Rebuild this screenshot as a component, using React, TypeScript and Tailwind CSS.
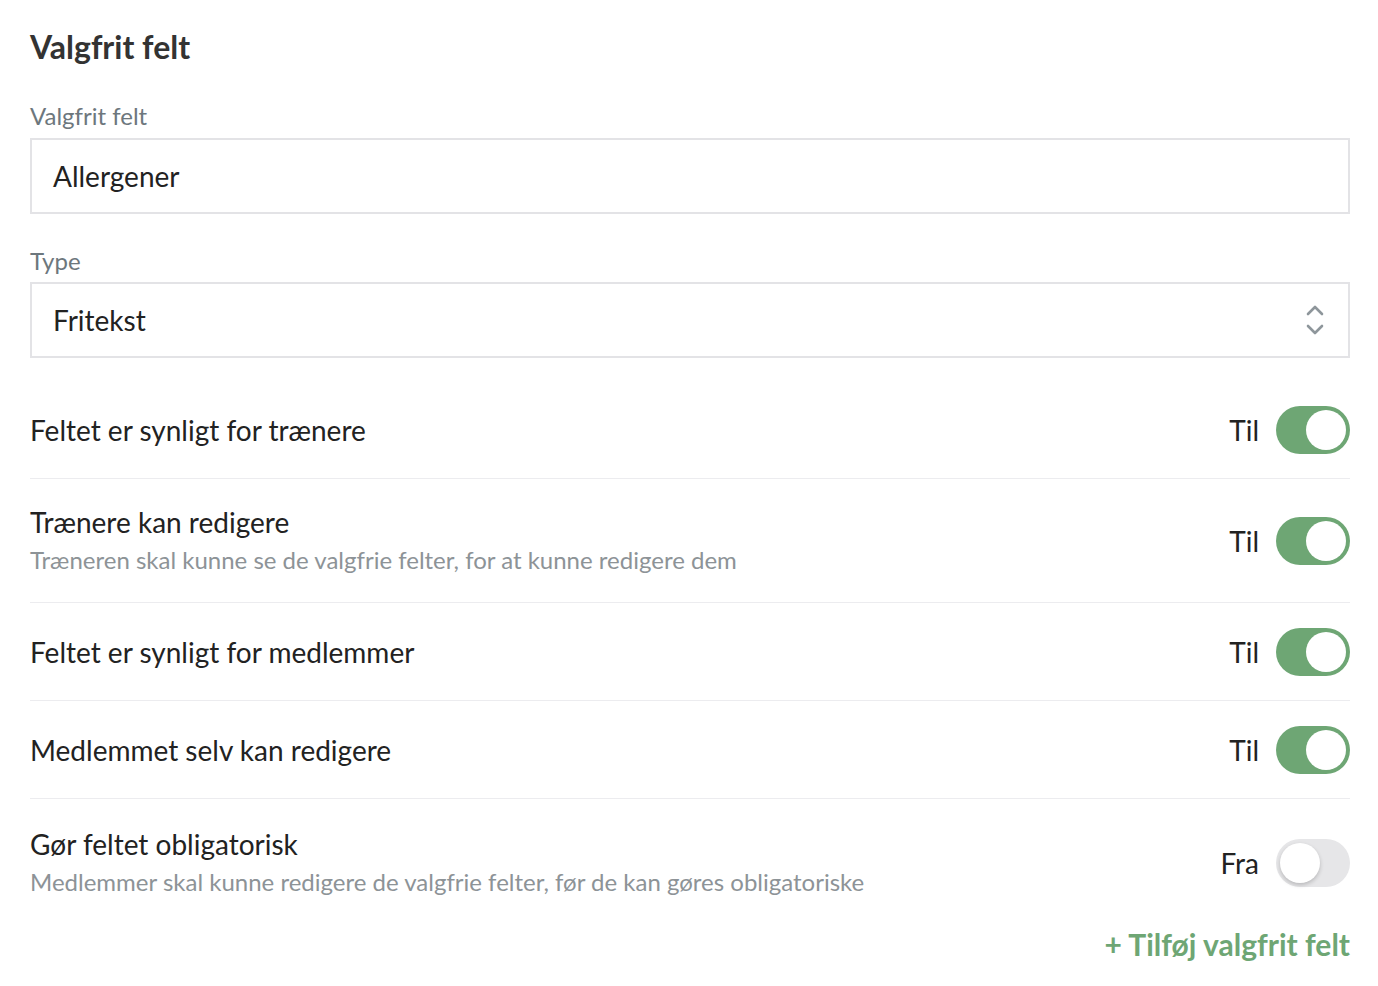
import React from "react";

function Toggle({ on }: { on: boolean }) {
  return (
    <div
      className={
        on
          ? "relative h-[48px] w-[74px] shrink-0 rounded-full bg-[#6ea674]"
          : "relative h-[48px] w-[74px] shrink-0 rounded-full bg-[#e6e6e8]"
      }
    >
      <div
        className={
          on
            ? "absolute top-[4px] left-[30px] h-[40px] w-[40px] rounded-full bg-white"
            : "absolute top-[4px] left-[4px] h-[40px] w-[40px] rounded-full bg-white shadow-[0_2px_4px_rgba(0,0,0,0.2)]"
        }
      />
    </div>
  );
}

function Row({
  title,
  desc,
  on,
  last,
}: {
  title: string;
  desc?: string;
  on: boolean;
  last?: boolean;
}) {
  return (
    <div
      className={
        last
          ? "flex items-center justify-between pt-[26px] pb-[20px]"
          : "flex min-h-[98px] items-center justify-between border-b border-[#ececef] py-[24px]"
      }
    >
      <div className="flex flex-col">
        <div className="text-[28px] leading-[38px] text-[#222]">{title}</div>
        {desc && (
          <div className="text-[24px] leading-[37px] text-[#8d9397]">{desc}</div>
        )}
      </div>
      <div className="flex items-center gap-[17px]">
        <span className="text-[28px] text-[#222]">{on ? "Til" : "Fra"}</span>
        <Toggle on={on} />
      </div>
    </div>
  );
}

export default function App() {
  return (
    <div
      className="min-h-screen bg-white pl-[30px] pr-[28px] pt-[26px]"
      style={{ fontFamily: "Lato, 'Open Sans', sans-serif" }}
    >
      <h1 className="text-[32px] font-bold leading-[42px] text-[#333]">Valgfrit felt</h1>
      <div className="mt-[33px] text-[24px] leading-[30px] text-[#6d777d]">Valgfrit felt</div>
      <div className="mt-[7px] flex h-[76px] items-center border-2 border-[#e3e3e6] pl-[21px] text-[28px] text-[#222]">
        Allergener
      </div>
      <div className="mt-[32px] text-[24px] leading-[30px] text-[#6d777d]">Type</div>
      <div className="mt-[6px] flex h-[76px] items-center justify-between border-2 border-[#e3e3e6] pl-[21px] pr-[24px] text-[28px] text-[#222]">
        <span>Fritekst</span>
        <svg width="18" height="30" viewBox="0 0 18 30" fill="none" stroke="#8e969b" strokeWidth="2.6" strokeLinecap="round" strokeLinejoin="round">
          <path d="M2 9 L9 2 L16 9" />
          <path d="M2 21 L9 28 L16 21" />
        </svg>
      </div>
      <div className="mt-[23px]">
        <Row title="Feltet er synligt for trænere" on />
        <Row
          title="Trænere kan redigere"
          desc="Træneren skal kunne se de valgfrie felter, for at kunne redigere dem"
          on
        />
        <Row title="Feltet er synligt for medlemmer" on />
        <Row title="Medlemmet selv kan redigere" on />
        <Row
          title="Gør feltet obligatorisk"
          desc="Medlemmer skal kunne redigere de valgfrie felter, før de kan gøres obligatoriske"
          on={false}
          last
        />
      </div>
      <div className="mt-[2px] flex justify-end">
        <span className="text-[30px] font-bold text-[#6ea674]">+ Tilføj valgfrit felt</span>
      </div>
    </div>
  );
}
